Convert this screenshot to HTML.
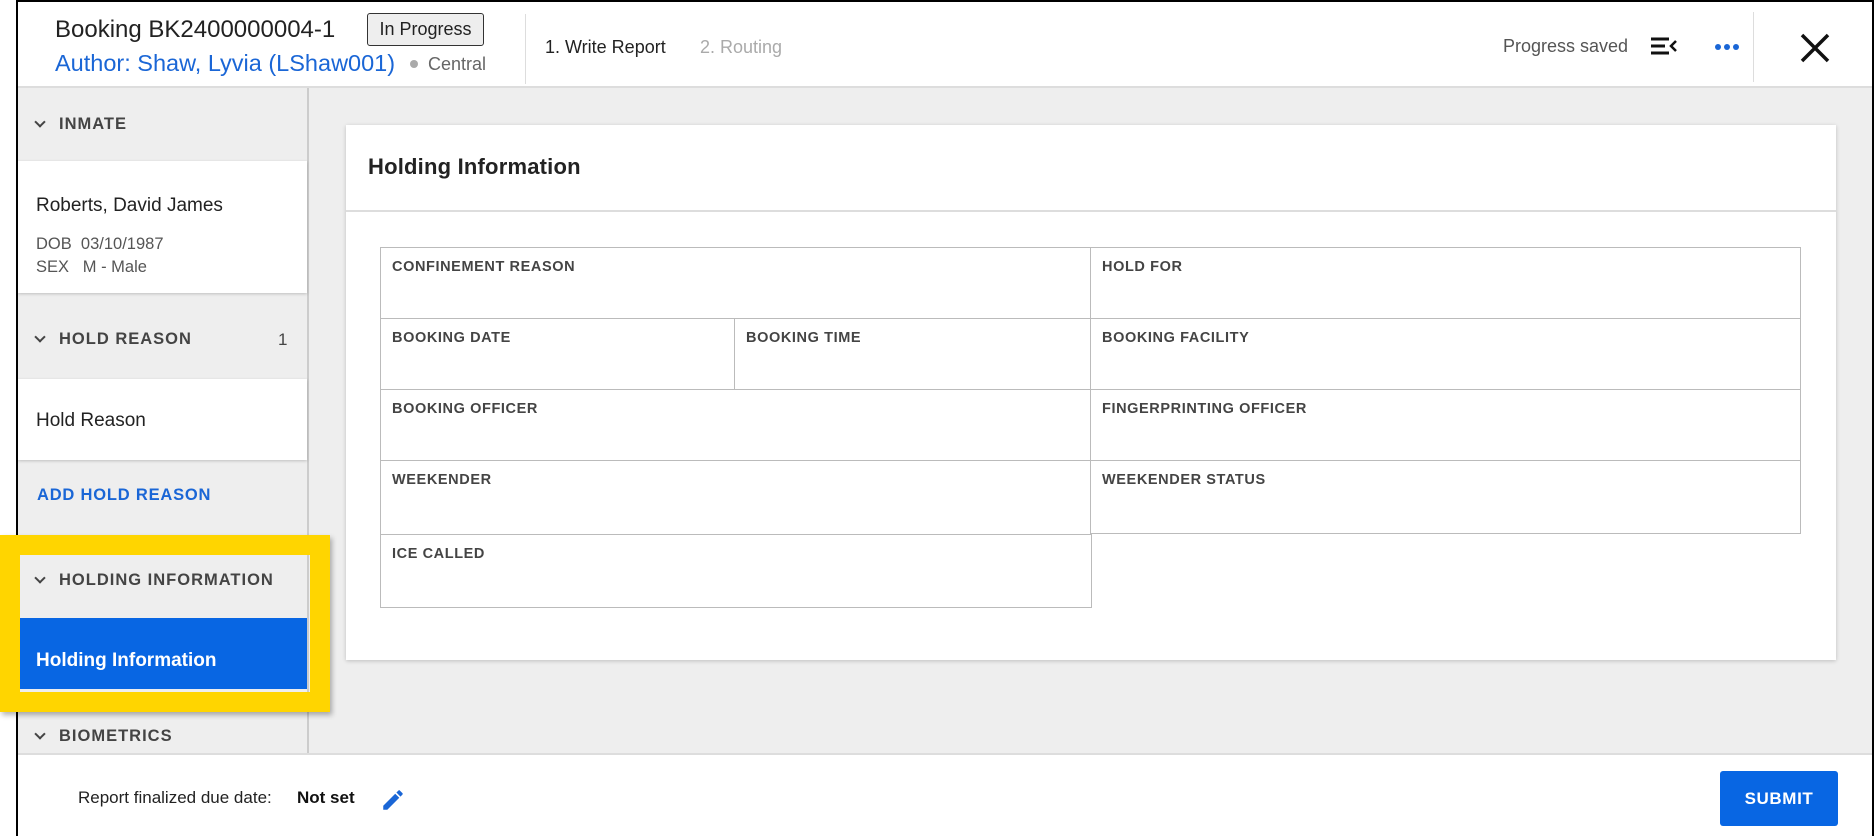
<!DOCTYPE html>
<html><head><meta charset="utf-8"><style>
*{box-sizing:border-box;margin:0;padding:0}
body{width:1875px;height:838px;background:#fff;font-family:"Liberation Sans",Arial,sans-serif;position:relative;overflow:hidden;color:#222}
.a{position:absolute}
.app{left:16px;top:0;width:1858px;height:836px;border:2px solid #000;background:#eee}
.hdr{left:0;top:0;width:1854px;height:86px;background:#fff;border-bottom:2px solid #ddd}
.lbl{font-size:14.5px;letter-spacing:.6px;color:#444;font-weight:bold;position:absolute;left:11px;top:11px}
.cell{position:absolute;border:1.5px solid #bbb;background:#fff}
.sh{font-size:16.5px;letter-spacing:1px;color:#444;font-weight:bold}
.chev{position:absolute;width:8px;height:8px;border-right:2px solid #444;border-bottom:2px solid #444;transform:rotate(45deg)}
</style></head><body>
<div class="a app">
 <div class="a hdr">
  <div class="a" style="left:37px;top:14px;font-size:24px;color:#222">Booking BK2400000004-1</div>
  <div class="a" style="left:349px;top:11px;width:117px;height:33px;border:1.5px solid #333;border-radius:3px;background:#eee;font-size:18px;text-align:center;line-height:30px;color:#222">In Progress</div>
  <div class="a" style="left:37px;top:48px;font-size:23.5px;color:#1a66d6">Author: Shaw, Lyvia (LShaw001)</div>
  <div class="a" style="left:392px;top:58px;width:8px;height:8px;border-radius:50%;background:#aaa"></div>
  <div class="a" style="left:410px;top:52px;font-size:18px;color:#666">Central</div>
  <div class="a" style="left:507px;top:12px;width:1px;height:70px;background:#ddd"></div>
  <div class="a" style="left:527px;top:35px;font-size:18px;color:#222">1. Write Report</div>
  <div class="a" style="left:682px;top:35px;font-size:18px;color:#aaa">2. Routing</div>
  <div class="a" style="left:1485px;top:34px;font-size:18px;color:#555">Progress saved</div>
  <svg class="a" style="left:1632px;top:34px" width="28" height="20" viewBox="0 0 28 20"><path d="M1 3h18M1 10h14M1 17h18" stroke="#111" stroke-width="3"/><path d="M26 5l-5 5 5 5" stroke="#111" stroke-width="2.5" fill="none"/></svg>
  <div class="a" style="left:1697px;top:42px;width:6px;height:6px;border-radius:50%;background:#1a66d6;box-shadow:9px 0 #1a66d6,18px 0 #1a66d6"></div>
  <div class="a" style="left:1735px;top:10px;width:1px;height:70px;background:#ddd"></div>
  <svg class="a" style="left:1782px;top:31px" width="30" height="30"><path d="M2 2L28 28M28 2L2 28" stroke="#111" stroke-width="3.5"/></svg>
 </div>
 <div class="a" style="left:0;top:86px;width:291px;height:665px;background:#eee;border-right:2px solid #ccc">
  <div class="chev" style="left:18px;top:30px"></div><div class="a sh" style="left:41px;top:27px">INMATE</div>
  <div class="a" style="left:0;top:73px;width:289px;height:132px;background:#fff;box-shadow:0 1px 3px rgba(0,0,0,.2)">
   <div class="a" style="left:18px;top:34px;font-size:19px;color:#222">Roberts, David James</div>
   <div class="a" style="left:18px;top:72px;font-size:16.5px;color:#555;line-height:23px">DOB&nbsp;&nbsp;03/10/1987<br>SEX&nbsp;&nbsp;&nbsp;M - Male</div>
  </div>
  <div class="chev" style="left:18px;top:245px"></div><div class="a sh" style="left:41px;top:242px">HOLD REASON</div>
  <div class="a" style="left:260px;top:242px;font-size:17px;color:#444">1</div>
  <div class="a" style="left:0;top:291px;width:289px;height:81px;background:#fff;box-shadow:0 1px 3px rgba(0,0,0,.2)">
   <div class="a" style="left:18px;top:31px;font-size:19px;color:#222">Hold Reason</div>
  </div>
  <div class="a" style="left:19px;top:398px;font-size:16.5px;letter-spacing:.8px;color:#1a66d6;font-weight:bold">ADD HOLD REASON</div>
  <div class="chev" style="left:18px;top:486px"></div><div class="a sh" style="left:41px;top:483px">HOLDING INFORMATION</div>
  <div class="a" style="left:0;top:530px;width:289px;height:71px;background:#0866e3">
   <div class="a" style="left:18px;top:32px;font-size:19px;color:#fff;font-weight:bold">Holding Information</div>
  </div>
  <div class="chev" style="left:18px;top:642px"></div><div class="a sh" style="left:41px;top:639px">BIOMETRICS</div>
 </div>
 <div class="a" style="left:328px;top:123px;width:1490px;height:535px;background:#fff;box-shadow:0 1px 4px rgba(0,0,0,.2)">
  <div class="a" style="left:22px;top:29px;font-size:22px;color:#222;font-weight:bold;letter-spacing:.2px">Holding Information</div>
  <div class="a" style="left:0;top:85px;width:100%;height:2px;background:#ddd"></div>
 </div>
 <div class="cell" style="left:362px;top:245px;width:712px;height:73px"><span class="lbl">CONFINEMENT REASON</span></div>
 <div class="cell" style="left:1072px;top:245px;width:711px;height:73px"><span class="lbl">HOLD FOR</span></div>
 <div class="cell" style="left:362px;top:316px;width:356px;height:73px"><span class="lbl">BOOKING DATE</span></div>
 <div class="cell" style="left:716px;top:316px;width:358px;height:73px"><span class="lbl">BOOKING TIME</span></div>
 <div class="cell" style="left:1072px;top:316px;width:711px;height:73px"><span class="lbl">BOOKING FACILITY</span></div>
 <div class="cell" style="left:362px;top:387px;width:712px;height:73px"><span class="lbl">BOOKING OFFICER</span></div>
 <div class="cell" style="left:1072px;top:387px;width:711px;height:73px"><span class="lbl">FINGERPRINTING OFFICER</span></div>
 <div class="cell" style="left:362px;top:458px;width:712px;height:76px"><span class="lbl">WEEKENDER</span></div>
 <div class="cell" style="left:1072px;top:458px;width:711px;height:74px"><span class="lbl">WEEKENDER STATUS</span></div>
 <div class="cell" style="left:362px;top:532px;width:712px;height:74px"><span class="lbl">ICE CALLED</span></div>
 <div class="a" style="left:0;top:751px;width:1854px;height:83px;background:#fff;border-top:2px solid #ddd">
  <div class="a" style="left:60px;top:33px;font-size:17px;color:#222">Report finalized due date:</div>
  <div class="a" style="left:279px;top:33px;font-size:17px;color:#111;font-weight:bold">Not set</div>
  <svg class="a" style="left:362px;top:32px" width="26" height="26" viewBox="0 0 24 24"><path d="M3 17.25V21h3.75L17.81 9.94l-3.75-3.75L3 17.25zM20.71 7.04a1 1 0 000-1.41l-2.34-2.34a1 1 0 00-1.41 0l-1.83 1.83 3.75 3.75 1.83-1.83z" fill="#1a66d6"/></svg>
  <div class="a" style="left:1702px;top:16px;width:118px;height:55px;background:#0866e3;border-radius:3px;color:#fff;font-weight:bold;font-size:17px;letter-spacing:.6px;text-align:center;line-height:55px">SUBMIT</div>
 </div>
</div>
<div class="a" style="left:0;top:535px;width:330px;height:177px;border:20px solid #ffd500;box-shadow:2px 3px 5px rgba(0,0,0,.3)"></div>
</body></html>
